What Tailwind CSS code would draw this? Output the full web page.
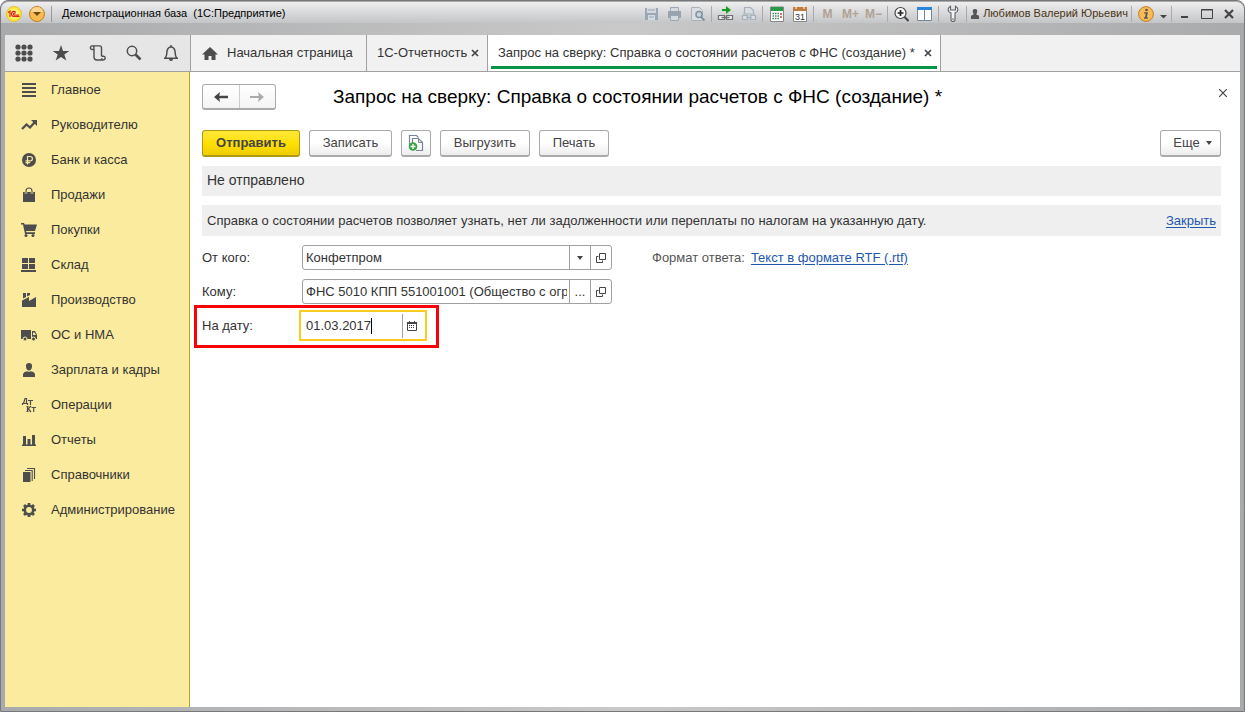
<!DOCTYPE html>
<html lang="ru">
<head>
<meta charset="utf-8">
<meta name="viewport" content="width=device-width, initial-scale=1">
<title>Демонстрационная база (1С:Предприятие)</title>
<script src="https://cdn.jsdelivr.net/npm/@tailwindcss/browser@4"></script>
</head>
<body class="bg-white font-['Liberation_Sans',Arial,sans-serif] text-[13px] leading-4 text-[#333]">
<div class="flex min-h-screen flex-col rounded-t-lg border border-[#77787a] bg-linear-to-r from-[#a9aaac] via-[#c9c9c9] to-[#a9aaac] px-1 pb-1">

  <header class="-mx-1 mb-3 flex h-[22px] items-center rounded-t-lg border-t border-[#aaa] bg-linear-to-b from-[#eeeeef] to-[#c4c5c7] pt-[2px] pr-1 pl-[5px] text-xs text-black">
    <button aria-label="1С" class="mr-[7px]"><svg width="16" height="16" viewBox="0 0 16 16"><defs><radialGradient id="y"><stop offset="0" stop-color="#fffde0"/><stop offset=".55" stop-color="#fff36a"/><stop offset="1" stop-color="#ffdf20"/></radialGradient></defs><circle cx="8" cy="8" r="7.5" fill="url(#y)" stroke="#e4c33a"/><path d="M2 6.500 4 5.200V11M9.800 6.300A2.500 2.500 0 1 0 8 10.400H13.500M9.200 7.800A1 1 0 1 0 8.200 9H13" fill="none" stroke="#e02417" stroke-width="1.200"/></svg></button>
    <button aria-label="Меню"><svg width="16" height="16" viewBox="0 0 16 16"><circle cx="8" cy="8" r="7.500" fill="#fbb94e" stroke="#b98125"/><path d="M2 6a6 5 0 0 1 12 0Z" fill="#fdd48e"/><path d="M4 6h8l-4 4Z" fill="#6b4a16"/></svg></button>
    <span class="mx-[6px] h-4 w-px bg-[#999]"></span>
    <span class="ml-1 whitespace-pre text-[11px]">Демонстрационная база  (1С:Предприятие)</span>
    <div class="ml-auto flex items-center [&>button]:flex [&>button]:justify-center [&>span]:mx-[2px] [&>span]:h-4 [&>span]:w-px [&>span]:bg-[#aaa]">
      <button aria-label="Сохранить" class="w-[23px]"><svg width="15" height="16" viewBox="0 0 15 16"><path d="M1 2h13v12H1Z" fill="#9aa7b4"/><path d="M3 2h9v5H3ZM4 9h7v5H4Z" fill="#d5dade"/><path d="M4 4h7M5 11h5" stroke="#9aa7b4"/></svg></button>
      <button aria-label="Печать документа" class="w-[23px]"><svg width="15" height="16" viewBox="0 0 15 16"><path d="M3.500 6V1.500H11.500V6" fill="#d5dade" stroke="#9aa7b4"/><path d="M1 5h13v7H1Z" fill="#98a3ad"/><path d="M3.500 9.500h8v5h-8Z" fill="#d5dade" stroke="#9aa7b4"/></svg></button>
      <button aria-label="Просмотр" class="w-[23px]"><svg width="16" height="16" viewBox="0 0 16 16"><path d="M1.500 1.500h8l3 3v10h-11Z" fill="#dadee1" stroke="#aab3ba"/><circle cx="9" cy="8.500" r="3" fill="#c9d6e0" stroke="#8294a3" stroke-width="1.500"/><path d="m11 11 3.500 3.500" stroke="#8294a3" stroke-width="2"/></svg></button>
      <span></span>
      <button aria-label="Получить ссылку" class="w-[23px]"><svg width="17" height="16" viewBox="0 0 17 16"><path d="M5 3h4V0l5 4-5 4V5H5Z" fill="#169b22"/><path d="M1.500 9.500h6v4h-6ZM9.500 9.500h6v4h-6Z" fill="#eee" stroke="#6b7074" stroke-width="1.200"/><path d="M4.500 11.500h8" stroke="#6b7074" stroke-width="1.400"/></svg></button>
      <button aria-label="Перейти по ссылке" class="w-[23px]"><svg width="16" height="16" viewBox="0 0 16 16"><path d="M3.500 8V1.500h6l3 3V8M1.500 9.500h5v4h-5ZM9.500 9.500h5v4h-5ZM5 11.500h6M2 8h12" fill="#d9dde1" stroke="#a5b1bc" stroke-width="1.200"/></svg></button>
      <span></span>
      <button aria-label="Калькулятор" class="w-[23px]"><svg width="14" height="16" viewBox="0 0 14 16"><path d="M.5 1h13v14.500H.5Z" fill="#fff" stroke="#888"/><path d="M1 1h12v4H1Z" fill="#289a46"/><path d="M2.500 7.500h7M2.500 10h7M2.500 12.500h7" stroke="#498360" stroke-width="1.400" stroke-dasharray="1.500 1"/><path d="M11 7v6" stroke="#c84c3b" stroke-width="1.500" stroke-dasharray="2 1"/></svg></button>
      <button aria-label="Календарь" class="w-[23px]"><svg width="14" height="16" viewBox="0 0 14 16"><path d="M.5 2h13v13.500H.5Z" fill="#fff" stroke="#888"/><path d="M0 1h14v4H0Z" fill="#c07a3c"/><path d="M3 0v3M11 0v3" stroke="#fff"/><text x="7" y="13.500" text-anchor="middle" font-size="9" font-family="Liberation Sans" fill="#333">31</text></svg></button>
      <span></span>
      <button class="w-[23px] font-bold text-[#b0a294]">M</button>
      <button class="w-[23px] font-bold text-[#b0a294]">M+</button>
      <button class="w-[23px] font-bold text-[#b0a294]">M−</button>
      <span></span>
      <button aria-label="Увеличить" class="w-[23px]"><svg width="15" height="16" viewBox="0 0 15 16"><circle cx="6.500" cy="7" r="5.500" fill="#f8f8f8" stroke="#444" stroke-width="1.200"/><path d="M3.500 7h6M6.500 4v6" stroke="#222" stroke-width="1.700"/><path d="m10.500 11 4 4" stroke="#444" stroke-width="2"/></svg></button>
      <button aria-label="Панели" class="w-[23px]"><svg width="15" height="16" viewBox="0 0 15 16"><path d="M.5 1.500h14v13H.5Z" fill="#fff" stroke="#71889c"/><path d="M0 1h15v3H0Z" fill="#2a86d6"/><path d="M7.500 4v10" stroke="#71889c"/></svg></button>
      <span></span>
      <button aria-label="Сервис" class="w-[23px]"><svg width="12" height="17" viewBox="0 0 12 17"><path d="M3.500 1.200C0 3 .5 7 4 8v6.500a2 2 0 0 0 4 0V8c3.500-1 4-5 .5-6.800V5H3.500Z" fill="#f3f3f3" stroke="#5c6066" stroke-width="1.100"/><circle cx="6" cy="14" r=".8" fill="#555"/></svg></button>
      <span></span>
      <button class="w-[160px] items-center gap-[3px] text-[11px] whitespace-nowrap text-[#4a3412]"><svg width="10" height="12" viewBox="0 0 10 12"><path d="M5 1c2 0 2.500 1.200 2.200 2.800L6.300 6.500 9 7.700V11H1V7.700l2.700-1.200-.9-2.700C2.500 2.200 3 1 5 1Z" fill="#555"/></svg>Любимов Валерий Юрьевич</button>
      <span></span>
      <button aria-label="Справка" class="w-[23px]"><svg width="16" height="16" viewBox="0 0 16 16"><circle cx="8" cy="8" r="7.400" fill="#f9bb55" stroke="#b98125"/><circle cx="8.500" cy="4" r="1.300" fill="#555"/><path d="M6.300 7h2.500l-1 5h2M6 12h2" fill="none" stroke="#555" stroke-width="1.700"/></svg></button>
      <button aria-label="Ещё команды" class="w-3"><svg width="9" height="10" viewBox="0 0 9 10"><path d="M1 6h7L4.500 9.500Z" fill="#444"/></svg></button>
      <span></span>
      <button aria-label="Свернуть" class="w-[22px]"><svg width="10" height="12" viewBox="0 0 10 12"><path d="M1 9h7" stroke="#444" stroke-width="2"/></svg></button>
      <button aria-label="Развернуть" class="w-[22px]"><svg width="12" height="12" viewBox="0 0 12 12"><path d="M.5 1.500h11v9H.5ZM0 2h12" fill="none" stroke="#444"/></svg></button>
      <button aria-label="Закрыть окно" class="w-[22px]"><svg width="10" height="10" viewBox="0 0 10 10"><path d="m1 1 8 8m0-8L1 9" stroke="#444" stroke-width="2.200"/></svg></button>
    </div>
  </header>

  <nav class="flex h-[37px] border-b border-[#a0a0a0] bg-[#f1f1f1]" aria-label="Открытые окна">
    <div class="flex w-[186px] items-center justify-between border-r border-[#a0a0a0] bg-[#e6e6e6] px-[10px] text-[#4d4d4d]">
      <button aria-label="Разделы"><svg width="18" height="18" viewBox="0 0 18 18" fill="currentColor"><circle cx="3" cy="3" r="2.600"/><circle cx="9" cy="3" r="2.600"/><circle cx="15" cy="3" r="2.600"/><circle cx="3" cy="9" r="2.600"/><circle cx="9" cy="9" r="2.600"/><circle cx="15" cy="9" r="2.600"/><circle cx="3" cy="15" r="2.600"/><circle cx="9" cy="15" r="2.600"/><circle cx="15" cy="15" r="2.600"/></svg></button>
      <button aria-label="Избранное"><svg width="18" height="18" viewBox="0 0 18 18" fill="currentColor"><path d="m9 1 2 6h6.300l-5 3.600 2 6L9 13l-5.300 3.600 2-6-5-3.600H7Z"/></svg></button>
      <button aria-label="История"><svg width="18" height="18" viewBox="0 0 18 18" fill="none" stroke="currentColor" stroke-width="1.400"><path d="M4.800 5.500H3.200a1.800 1.800 0 1 1 1.800-1.800V13a3 3 0 0 0 3 3h6.500M3.200 1.900h7.300a2 2 0 0 1 2 2v8.300M12.600 14.200a1.800 1.800 0 1 0 1.900-1.900h-1.900"/></svg></button>
      <button aria-label="Поиск"><svg width="18" height="18" viewBox="0 0 18 18" fill="none" stroke="currentColor"><circle cx="7" cy="7" r="4.700" stroke-width="1.500"/><path d="m10.500 10.500 5 5" stroke-width="2.700"/></svg></button>
      <button aria-label="Оповещения"><svg width="18" height="18" viewBox="0 0 18 18" fill="none" stroke="currentColor" stroke-width="1.500"><path d="M2 14.200h14M3.200 14c2-2 1.300-4 1.800-7 .6-2.500 2-4 4-4s3.400 1.500 4 4c.5 3-.2 5 1.800 7M9 1v2"/><path d="M7 15h4a2 2 0 0 1-4 0Z" fill="currentColor" stroke="none"/></svg></button>
    </div>
    <a href="#" class="flex w-[176px] items-center gap-2 border-r border-[#a0a0a0] pl-[10px]"><svg width="18" height="16" viewBox="0 0 18 16"><path d="M9 2 1 9.500h2.500V15h4v-4h3v4h4V9.500H17Z" fill="#4d4d4d"/></svg>Начальная страница</a>
    <div class="flex w-[121px] items-center border-r border-[#a0a0a0] pl-[10px]"><a href="#">1С-Отчетность</a><button aria-label="Закрыть 1С-Отчетность" class="ml-auto pr-2"><svg width="8" height="8" viewBox="0 0 8 8"><path d="m1 1 6 6m0-6L1 7" stroke="#444" stroke-width="1.700"/></svg></button></div>
    <div class="flex w-[453px] flex-col border-r border-[#a0a0a0] bg-white px-[3px] pb-[2px]">
      <div class="flex flex-1 items-center justify-between border-b-3 border-[#009646] pt-1 pr-[5px] pl-[7px]"><a href="#" class="whitespace-nowrap">Запрос на сверку: Справка о состоянии расчетов с ФНС (создание) *</a><button aria-label="Закрыть запрос"><svg width="8" height="8" viewBox="0 0 8 8"><path d="m1 1 6 6m0-6L1 7" stroke="#444" stroke-width="1.700"/></svg></button></div>
    </div>
  </nav>

  <div class="flex flex-1">
    <aside class="w-[185px] border-r border-[#b5a524] bg-[#fbeb9e]">
      <ul class="text-[#4d4d4d] [&_a]:flex [&_a]:h-[35px] [&_a]:items-center [&_a]:gap-[14px] [&_a]:pl-4 [&_span]:text-[#333]">
        <li><a href="#"><svg width="16" height="16" viewBox="0 0 16 16"><path d="M1 2h14M1 6h14M1 10h14M1 14h14" stroke="currentColor" stroke-width="1.800"/></svg><span>Главное</span></a></li>
        <li><a href="#"><svg width="16" height="16" viewBox="0 0 16 16"><path d="m1 12 4.500-4.500 3.500 3 4.500-5" fill="none" stroke="currentColor" stroke-width="2.300"/><path d="M10 3h6v6Z" fill="currentColor"/></svg><span>Руководителю</span></a></li>
        <li><a href="#"><svg width="16" height="16" viewBox="0 0 16 16"><circle cx="8" cy="8" r="7" fill="currentColor"/><path d="M6.500 12.500v-8h2.700a2.200 2.200 0 0 1 0 4.400H4.500M4.500 10.700h4.700" fill="none" stroke="#fbeb9e" stroke-width="1.200"/></svg><span>Банк и касса</span></a></li>
        <li><a href="#"><svg width="16" height="16" viewBox="0 0 16 16"><path d="M2 5h12v10H2Z" fill="currentColor"/><path d="M5 7V4a3 3 0 0 1 6 0v3" fill="none" stroke="#fbeb9e" stroke-width="2.400"/><path d="M5 7V4a3 3 0 0 1 6 0v3" fill="none" stroke="currentColor" stroke-width="1.100"/></svg><span>Продажи</span></a></li>
        <li><a href="#"><svg width="16" height="16" viewBox="0 0 16 16"><path d="M0 1h3l.6 1.500H16L14 9H5l.4 1.300H14V12H4L2 2.500H0Z" fill="currentColor"/><circle cx="5" cy="13.500" r="1.500" fill="currentColor"/><circle cx="12" cy="13.500" r="1.500" fill="currentColor"/></svg><span>Покупки</span></a></li>
        <li><a href="#"><svg width="16" height="16" viewBox="0 0 16 16"><path d="M1 1h6v5H1ZM8 1h6v5H8ZM1 7h6v5H1ZM8 7h6v5H8ZM0 13h15v2H0Z" fill="currentColor"/></svg><span>Склад</span></a></li>
        <li><a href="#"><svg width="16" height="16" viewBox="0 0 16 16"><path d="M1 15V8.500L8 5v4l7-4v10ZM2 1h3v4L2 6.500ZM6 1h3v2L6 4.500Z" fill="currentColor"/></svg><span>Производство</span></a></li>
        <li><a href="#"><svg width="16" height="16" viewBox="0 0 16 16"><path d="M0 3h10v9H0Z" fill="currentColor"/><path d="M11 4h3l2 4v4h-5Z" fill="currentColor"/><path d="M12 5.500h1.500L15 8h-3Z" fill="#fbeb9e"/><circle cx="4" cy="12" r="2" fill="currentColor" stroke="#fbeb9e"/><circle cx="12.500" cy="12" r="2" fill="currentColor" stroke="#fbeb9e"/></svg><span>ОС и НМА</span></a></li>
        <li><a href="#"><svg width="16" height="16" viewBox="0 0 16 16"><path d="M8 1c2.300 0 3.300 1.500 3 3.500C10.800 7 9.500 8.500 8 8.500S5.200 7 5 4.500C4.700 2.500 5.700 1 8 1ZM2 15v-3l1.500-2 3-.7 1.500.7 1.500-.7 3 .7L14 12v3Z" fill="currentColor"/></svg><span>Зарплата и кадры</span></a></li>
        <li><a href="#"><svg width="16" height="16" viewBox="0 0 16 16" fill="none" stroke="currentColor" stroke-width="1.200"><path d="M1.500 8V6.500h5V8M2.500 6.500 4 1.500h1.500v5M7 3.500h5M9.500 3.500V8M6.500 9v6M5.500 9.500h2M5.500 14.500h2M7 12l3-3M7 11.500l3 3.500M10.500 10.500H15M12.700 10.500V15"/></svg><span>Операции</span></a></li>
        <li><a href="#"><svg width="16" height="16" viewBox="0 0 16 16"><path d="M1 12.500h14V14H1ZM2 4h3v9H2ZM6.500 7h3v6h-3ZM11 3h3v10h-3Z" fill="currentColor"/></svg><span>Отчеты</span></a></li>
        <li><a href="#"><svg width="16" height="16" viewBox="0 0 16 16"><path d="M2 5h7.500v10H2Z" fill="currentColor"/><path d="M4 3.500h7.200V14M6 1.500h7.500V12" fill="none" stroke="currentColor" stroke-width="1.100"/></svg><span>Справочники</span></a></li>
        <li><a href="#"><svg width="16" height="16" viewBox="0 0 16 16" fill="none" stroke="currentColor"><circle cx="8" cy="8" r="4.200" stroke-width="2.600"/><path d="M8 1v2.500M8 12.500V15M1 8h2.500M12.500 8H15M3 3l2 2M11 11l2 2M13 3l-2 2M5 11l-2 2" stroke-width="2.700"/></svg><span>Администрирование</span></a></li>
      </ul>
    </aside>

    <main class="min-w-0 flex-1 bg-white pt-3 pr-[19px] pl-3">
      <div class="flex h-[26px] items-center">
        <div class="flex h-[26px] w-[74px] rounded-[3px] border border-b-2 border-[#aaa] bg-linear-to-b from-white to-[#f4f4f4]">
          <button aria-label="Назад" class="flex flex-1 items-center justify-center border-r border-[#ccc]"><svg width="14" height="12" viewBox="0 0 14 12"><path d="M4 6h10" stroke="#444" stroke-width="2.500"/><path d="m0 6 6-5-1 5 1 5Z" fill="#444"/></svg></button>
          <button aria-label="Вперед" class="flex flex-1 items-center justify-center"><svg width="14" height="12" viewBox="0 0 14 12"><path d="M0 6h10" stroke="#aaa" stroke-width="2"/><path d="m14 6-6-5 1 5-1 5Z" fill="#aaa"/></svg></button>
        </div>
        <h1 class="ml-[57px] text-[19px] text-black">Запрос на сверку: Справка о состоянии расчетов с ФНС (создание) *</h1>
        <button aria-label="Закрыть" class="-mr-3 mb-2 ml-auto p-[6px]"><svg width="8" height="8" viewBox="0 0 8 8"><path d="m0 0 8 8m0-8L0 8" stroke="#444" stroke-width="1.200"/></svg></button>
      </div>

      <div class="mt-5 flex gap-[9px] text-[#444] [&>button]:h-[27px] [&>button]:rounded-[3px] [&>button]:border [&>button]:border-b-2">
        <button class="w-[98px] border-[#ad9a12] bg-linear-to-b from-[#ffe834] via-[#ffe000] to-[#efcd00] font-bold">Отправить</button>
        <button class="w-[83px] border-[#aaa] bg-linear-to-b from-white from-50% to-[#ededed]">Записать</button>
        <button aria-label="Создать на основании" class="flex w-[30px] items-center justify-center border-[#aaa] bg-linear-to-b from-white from-50% to-[#ededed]"><svg width="16" height="18" viewBox="0 0 16 18"><path d="M1.500 11V1.500h7l2 2M4.500 10V4.500h6l4 4v8H8" fill="none" stroke="#778695" stroke-width="1.200"/><path d="M10.500 4.500v4h4" fill="none" stroke="#778695"/><circle cx="5" cy="12.500" r="4.300" fill="#36a545"/><path d="M2.500 12.500h5M5 10v5" stroke="#fff" stroke-width="1.300"/></svg></button>
        <button class="w-[90px] border-[#aaa] bg-linear-to-b from-white from-50% to-[#ededed]">Выгрузить</button>
        <button class="w-[70px] border-[#aaa] bg-linear-to-b from-white from-50% to-[#ededed]">Печать</button>
        <button class="ml-auto flex w-[61px] items-center justify-center gap-[6px] border-[#aaa] bg-linear-to-b from-white from-50% to-[#ededed] pl-1">Еще<svg width="6" height="4" viewBox="0 0 6 4"><path d="M0 0h6L3 4Z" fill="#444"/></svg></button>
      </div>

      <p class="mt-[9px] flex h-[30px] items-center bg-[#efefef] px-[5px] pb-[2px] text-sm">Не отправлено</p>
      <div class="mt-[9px] flex h-[31px] items-center justify-between bg-[#efefef] px-[5px]"><p>Справка о состоянии расчетов позволяет узнать, нет ли задолженности или переплаты по налогам на указанную дату.</p><a href="#" class="text-[#1d57b0] underline underline-offset-2">Закрыть</a></div>

      <form class="mt-[9px]">
        <div class="flex items-center">
          <label for="from" class="w-[100px]">От кого:</label>
          <div class="flex h-[25px] w-[310px] rounded-[3px] border border-[#a0a0a0]">
            <input id="from" value="Конфетпром" class="min-w-0 flex-1 px-[3px] outline-none">
            <button type="button" aria-label="Выбрать из списка" class="flex w-[21px] items-center justify-center border-l border-[#a0a0a0]"><svg width="6" height="4" viewBox="0 0 6 4"><path d="M0 0h6L3 4Z" fill="#444"/></svg></button>
            <button type="button" aria-label="Открыть организацию" class="flex w-[21px] items-center justify-center border-l border-[#a0a0a0]"><svg width="10" height="10" viewBox="0 0 10 10"><path d="M3.500.5h6v6h-6ZM2.500 3.500h-2v6h6v-2" fill="none" stroke="#444"/></svg></button>
          </div>
          <span class="ml-10 text-[#555]">Формат ответа:</span><a href="#" class="ml-[6px] text-[#1d57b0] underline underline-offset-2">Текст в формате RTF (.rtf)</a>
        </div>
        <div class="mt-[9px] flex items-center">
          <label for="to" class="w-[100px]">Кому:</label>
          <div class="flex h-[25px] w-[310px] rounded-[3px] border border-[#a0a0a0]">
            <input id="to" value="ФНС 5010 КПП 551001001 (Общество с ограниченной ответственностью)" class="mr-[2px] min-w-0 flex-1 pl-[3px] outline-none">
            <button type="button" aria-label="Выбрать получателя" class="w-[21px] border-l border-[#a0a0a0]">...</button>
            <button type="button" aria-label="Открыть получателя" class="flex w-[21px] items-center justify-center border-l border-[#a0a0a0]"><svg width="10" height="10" viewBox="0 0 10 10"><path d="M3.500.5h6v6h-6ZM2.500 3.500h-2v6h6v-2" fill="none" stroke="#444"/></svg></button>
          </div>
        </div>
        <div class="mt-px -ml-2 flex h-[43px] w-[245px] items-center border-3 border-[#fb0007] pb-[2px] pl-[5px]">
          <label for="date" class="w-[97px]">На дату:</label>
          <div class="flex h-[31px] w-[128px] items-center border-2 border-[#fbcb1e]">
            <div class="flex flex-1 items-center pl-[5px]"><input id="date" value="01.03.2017" class="field-sizing-content outline-none"><span class="h-4 w-px bg-black"></span></div>
            <button type="button" aria-label="Выбрать дату" class="flex h-6 w-[23px] items-center border-l border-[#a0a0a0] pl-1"><svg width="10" height="10" viewBox="0 0 10 10"><path d="M.5 1.500h9v8h-9Z" fill="none" stroke="#444"/><path d="M0 1h10v2H0ZM2 0h1v2H2ZM7 0h1v2H7Z" fill="#444"/><path d="M2 4.500h6M2 6.500h6" stroke="#444" stroke-dasharray="1 1"/></svg></button>
          </div>
        </div>
      </form>
    </main>
  </div>
</div>
</body>
</html>
